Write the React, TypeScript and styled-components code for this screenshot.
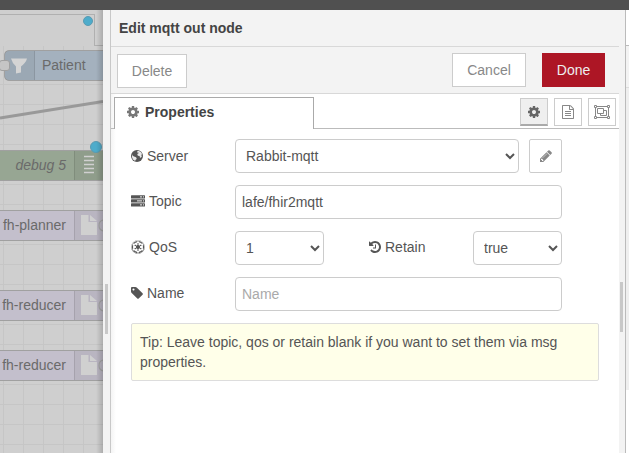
import React from "react";
import styled, { createGlobalStyle, css } from "styled-components";
import { FaEmpire } from "react-icons/fa";

const Global = createGlobalStyle`
  * { box-sizing: border-box; }
  html, body { margin: 0; padding: 0; overflow: hidden; }
  body, button, input, select { font-family: "Liberation Sans", Arial, sans-serif; font-size: 14px; }
`;

const Page = styled.div`
  display: flex;
  flex-direction: column;
  width: 629px;
  height: 453px;
  color: #555;
  line-height: 20px;
  background: #fff;
`;
const TopBar = styled.div`height: 10px; flex: none; background: #505050;`;
const Main = styled.div`display: flex; flex: 1; min-height: 0;`;

const Workspace = styled.div`
  position: relative;
  width: 103px;
  flex: none;
  overflow: hidden;
  background: #cfcfcf;
  &::after {
    content: "";
    position: absolute;
    inset: 0 0 0 auto;
    width: 7px;
    background: linear-gradient(to right, rgba(0,0,0,0), rgba(0,0,0,0.17));
  }
`;
const WorkspaceTab = styled.div`
  position: absolute;
  top: 4px;
  left: -2px;
  width: 97px;
  height: 32px;
  border: 1px solid #b0b0b0;
  border-bottom: 0;
`;
const TabEdge = styled.div`
  position: absolute; top: 35px; left: 95px; width: 8px; height: 1px; background: #b0b0b0;
`;
const Grid = styled.div`
  position: absolute;
  inset: 36px 0 0 0;
  background-image: linear-gradient(to right, #c6c6c6 1px, transparent 1px), linear-gradient(#c6c6c6 1px, transparent 1px);
  background-size: 20px 20px;
  background-position: 3px 18px;
`;
const Wire = styled.svg`position: absolute; left: 0; top: 0; width: 103px; height: 443px;`;
const Changed = styled.i<{ $x: number; $y: number; $s: number }>`
  position: absolute;
  left: ${p => p.$x}px;
  top: ${p => p.$y}px;
  width: ${p => p.$s}px;
  height: ${p => p.$s}px;
  border-radius: 50%;
  border: 1px solid #5a9bb2;
  background: #4eaccb;
`;
const Node = styled.div<{ $y: number; $fill: string; $right?: boolean }>`
  position: absolute;
  top: ${p => p.$y}px;
  left: ${p => (p.$right ? -20 : 4)}px;
  width: ${p => (p.$right ? 131 : 110)}px;
  height: 31px;
  display: flex;
  align-items: center;
  border: 1px solid #a0a0a0;
  border-radius: 5px;
  background: ${p => p.$fill};
  color: #6a6a6a;
`;
const NodeLabel = styled.span<{ $italic?: boolean; $left?: boolean }>`
  flex: 1;
  font-style: ${p => (p.$italic ? "italic" : "normal")};
  text-align: ${p => (p.$left ? "left" : "right")};
  padding: ${p => (p.$left ? "0 0 2px 7px" : "0 8px 2px 0")};
`;
const NodeIcon = styled.span<{ $left?: boolean }>`
  width: ${p => (p.$left ? 30 : 36)}px;
  height: 29px;
  flex: none;
  background: rgba(0, 0, 0, 0.05);
  ${p => (p.$left ? "border-right" : "border-left")}: 1px solid rgba(0,0,0,0.1);
  svg { display: block; }
`;
const Port = styled.i`
  position: absolute; left: -6px; top: 9px; width: 11px; height: 11px;
  border: 1px solid #a0a0a0; border-radius: 3px; background: #c5c5c5;
`;

const Separator = styled.div`
  width: 8px;
  flex: none;
  display: flex;
  align-items: flex-start;
  padding: 274px 0 0 2px;
  background: #f3f3f3;
  border-right: 1px solid #c8c8c8;
  height: 443px;
`;
const Grip = styled.i<{ $h: number }>`width: 3px; height: ${p => p.$h}px; background: #c8c8c8;`;

const Tray = styled.section`
  width: 508px;
  flex: none;
  display: flex;
  flex-direction: column;
  background: linear-gradient(to right, #f4f4f4, #fff 5px);
`;
const Title = styled.header`
  height: 37px;
  padding: 8px 8px 0;
  font-weight: bold;
  color: #444;
  background: #f3f3f3;
  border-bottom: 1px solid #d8d8d8;
`;
const Toolbar = styled.div`
  display: flex;
  height: 47px;
  padding: 6px 14px 0 6px;
  background: #f3f3f3;
  border-bottom: 1px solid #d8d8d8;
`;
const Spacer = styled.span`flex: 1;`;
const Button = styled.button<{ $primary?: boolean; $w: number; $drop?: boolean }>`
  width: ${p => p.$w}px;
  height: 34px;
  padding: 0;
  margin-top: ${p => (p.$drop ? 1 : 0)}px;
  border: 1px solid ${p => (p.$primary ? "#ad1625" : "#ccc")};
  background: ${p => (p.$primary ? "#ad1625" : "#fff")};
  color: ${p => (p.$primary ? "#eee" : "#888")};
  & + & { margin-left: 16px; }
`;

const Tabs = styled.div`display: flex; height: 35px;`;
const TabEdgeLeft = styled.span`width: 3px; border-bottom: 1px solid #bbb;`;
const Tab = styled.div`
  display: flex;
  align-items: center;
  gap: 5px;
  width: 200px;
  height: 32px;
  margin-top: 3px;
  padding: 0 0 4px 11px;
  font-weight: bold;
  color: #444;
  background: #fff;
  border: 1px solid #aaa;
  border-bottom: 0;
  svg { color: #777; }
`;
const TabTools = styled.div`
  flex: 1;
  display: flex;
  justify-content: flex-end;
  gap: 6px;
  padding: 4px 3px 0 0;
  border-bottom: 1px solid #bbb;
`;
const TabButton = styled.button<{ $active?: boolean }>`
  display: flex;
  align-items: center;
  justify-content: center;
  width: 28px;
  height: 28px;
  padding: 0;
  border: 1px solid #ccc;
  background: #fff;
  color: #888;
  ${p => p.$active && css`
    background: #efefef;
    color: #666;
    border-bottom: 2px solid #aaa;
  `}
`;

const Form = styled.form`
  display: flex;
  flex-direction: column;
  gap: 12px;
  padding: 10px 20px;
`;
const Row = styled.div`display: flex; height: 34px;`;
const Label = styled.label<{ $w?: number; $gap?: number; $up?: boolean }>`
  width: ${p => p.$w ?? 104}px;
  flex: none;
  display: flex;
  align-items: center;
  gap: ${p => p.$gap ?? 3}px;
  height: ${p => (p.$up ? 32 : 34)}px;
  svg { flex: none; }
`;
const field = css`
  height: 34px;
  border: 1px solid #ccc;
  border-radius: 4px;
  background: #fff;
  color: #555;
  outline: 0;
`;
const Input = styled.input`
  ${field}
  width: 327px;
  padding: 0 6px;
  &::placeholder { color: #aaa; opacity: 1; }
`;
const Select = styled.select<{ $w: number }>`
  ${field}
  width: ${p => p.$w}px;
  padding: 0 0 0 6px;
`;
const EditButton = styled.button`
  width: 33px;
  height: 34px;
  margin-left: 10px;
  padding: 0;
  display: flex;
  align-items: center;
  justify-content: center;
  border: 1px solid #ccc;
  border-radius: 2px;
  background: #fff;
  color: #888;
`;
const Tip = styled.div`
  width: 468px;
  height: 58px;
  padding: 8px;
  background: #ffffe9;
  border: 1px solid #ddd;
  border-radius: 2px;
`;

const RightSeparator = styled.div`
  width: 7px;
  flex: none;
  display: flex;
  align-items: flex-start;
  padding: 272px 0 0 1px;
  background: #f3f3f3;
  border-right: 1px solid #bbb;
  height: 443px;
`;
const Sidebar = styled.aside`
  width: 3px;
  flex: none;
  display: flex;
  flex-direction: column;
`;
const SidePart = styled.div<{ $h: number; $bg: string; $line?: string }>`
  height: ${p => p.$h}px;
  background: ${p => p.$bg};
  border-bottom: ${p => (p.$line ? `1px solid ${p.$line}` : "0")};
`;

const Glyph = ({ d, size = 14, left = 0 }: { d: string; size?: number; left?: number }) => (
  <svg width={size} height={size} viewBox={`${left} 0 1792 1792`} fill="currentColor"><path d={d} /></svg>
);
const COG = "M1152 896q0-106-75-181t-181-75-181 75-75 181 75 181 181 75 181-75 75-181zm512-109v222q0 12-8 23t-20 13l-185 28q-19 54-39 91 35 50 107 138 10 12 10 25t-9 23q-27 37-99 108t-94 71q-12 0-26-9l-138-108q-44 23-91 38-16 136-29 186-7 28-36 28h-222q-14 0-24.5-8.5t-11.5-21.5l-28-184q-49-16-90-37l-141 107q-10 9-25 9-14 0-25-11-126-114-165-168-7-10-7-23 0-12 8-23 15-21 51-66.5t54-70.5q-27-50-41-99l-183-27q-13-2-21-12.5t-8-23.5v-222q0-12 8-23t19-13l186-28q14-46 39-92-40-57-107-138-10-12-10-24 0-10 9-23 26-36 98.5-107.5t94.5-71.5q13 0 26 10l138 107q44-23 91-38 16-136 29-186 7-28 36-28h222q14 0 24.5 8.5t11.5 21.5l28 184q49 16 90 37l142-107q9-9 24-9 13 0 25 10 129 119 165 170 7 8 7 22 0 12-8 23-15 21-51 66.5t-54 70.5q26 50 41 98l183 28q13 2 21 12.5t8 23.5z";
const TAG = "M576 448q0-53-37.5-90.5t-90.5-37.5-90.5 37.5-37.5 90.5 37.5 90.5 90.5 37.5 90.5-37.5 37.5-90.5zm1067 576q0 53-37 90l-491 492q-39 37-91 37-53 0-90-37l-715-716q-38-37-64.5-101t-26.5-117v-416q0-52 38-90t90-38h416q53 0 117 26.5t102 64.5l715 714q37 39 37 91z";
const HISTORY = "M1664 896q0 156-61 298t-164 245-245 164-298 61q-172 0-327-72.5t-264-204.5q-7-10-6.5-22.5t8.5-20.5l137-138q10-9 25-9 16 2 23 12 73 95 179 147t225 52q104 0 198.5-40.5t163.5-109.5 109.5-163.5 40.5-198.5-40.5-198.5-109.5-163.5-163.5-109.5-198.5-40.5q-98 0-188 35.5t-160 101.5l137 138q31 30 14 69-17 40-59 40h-448q-26 0-45-19t-19-45v-448q0-42 40-59 39-17 69 14l130 129q107-101 244.5-156.5t284.5-55.5q156 0 298 61t245 164 164 245 61 298zm-640-288v448q0 14-9 23t-23 9h-320q-14 0-23-9t-9-23v-64q0-14 9-23t23-9h224v-352q0-14 9-23t23-9h64q14 0 23 9t9 23z";
const PENCIL = "M491 1536l91-91-235-235-91 91v107h128v128h107zm523-928q0-22-22-22-10 0-17 7l-542 542q-7 7-7 17 0 22 22 22 10 0 17-7l542-542q7-7 7-17zm-54-192l416 416-832 832h-416v-416zm683 96q0 53-37 90l-166 166-416-416 166-165q36-38 90-38 53 0 91 38l235 234q37 39 37 91z";
const FILE = "M1596 380q28 28 48 76t20 88v1152q0 40-28 68t-68 28h-1344q-40 0-68-28t-28-68v-1600q0-40 28-68t68-28h896q40 0 88 20t76 48zm-444-244v376h376q-10-29-22-41l-313-313q-12-12-41-22zm384 1528v-1024h-416q-40 0-68-28t-28-68v-416h-768v1536h1280zm-1024-864q0-14 9-23t23-9h704q14 0 23 9t9 23v64q0 14-9 23t-23 9h-704q-14 0-23-9t-9-23v-64zm736 224q14 0 23 9t9 23v64q0 14-9 23t-23 9h-704q-14 0-23-9t-9-23v-64q0-14 9-23t23-9h704zm0 256q14 0 23 9t9 23v64q0 14-9 23t-23 9h-704q-14 0-23-9t-9-23v-64q0-14 9-23t23-9h704z";

const Globe = () => (
  <svg width="13" height="12" viewBox="0 0 13 12">
    <circle cx="6" cy="6" r="6" fill="#555" />
    <path d="M6.300 1.100 8 .9l2 1.300 1.100 1.900-.8.8.5 1.500-1 1.300-.9-.3-.3-1.300-1.700-.3-.6-1.200.7-1.300 1-.1-.1-.7-.9.4-.6-.5z M1.100 4.200l.6 1.500 1.300.9 1.500.4 1.200 1-.3 1.200-1 .7-.2 1.200L2 9.400 1 7.200z" fill="#e9e9e9" />
  </svg>
);
const Server = () => (
  <svg width="14" height="12" viewBox="0 0 14 12">
    {[0, 4, 8].map(y => <rect key={y} y={y + 0.3} width="14" height="3.200" rx=".5" fill="#555" />)}
    <path d="M9 1.900h2M6 5.900h5M9 9.900h2" stroke="#eee" />
    <path d="M12 1.900h1M12 5.900h1M12 9.900h1" stroke="#eee" />
  </svg>
);
const ObjectGroup = () => (
  <svg width="16" height="14" viewBox="0 0 16 14" fill="none" stroke="#888">
    <path d="M3 1.500h10M3 12.500h10M1.500 3v8M14.500 3v8" />
    <path d="M.5.5h2v2h-2zM13.500.5h2v2h-2zM.5 11.500h2v2h-2zM13.500 11.500h2v2h-2z" fill="#fff" />
    <path d="M3.500 3.500h6v5h-6zM9.500 5.500h3v5h-6v-2" />
  </svg>
);
const Document = () => (
  <svg width="36" height="29" viewBox="0 0 36 29">
    <path d="M6 4h7.500v7H22v13H6zM15 4l7 6h-7z" fill="#d0d0d0" />
    <path d="M30 9q-6 0-6 5.500t6 5.500" fill="none" stroke="#a4a4a4" strokeWidth="1.200" />
  </svg>
);

export default function App() {
  return (
    <>
      <Global />
      <Page>
        <TopBar />
        <Main>
          <Workspace>
            <WorkspaceTab />
            <TabEdge />
            <Grid />
            <Wire><path d="M0 108 103 91.500" stroke="#999" strokeWidth="3" fill="none" /></Wire>
            <Node $y={40} $fill="#a4b1be">
              <NodeIcon $left>
                <svg width="29" height="29" viewBox="0 0 29 29"><path d="M6 7.500h16q-1 4-6 8v6l-5 1v-7q-4-4-5-8z" fill="#d4d4d4" /></svg>
              </NodeIcon>
              <NodeLabel $left>Patient</NodeLabel>
              <Port />
            </Node>
            <Node $y={140} $fill="#97a693" $right>
              <NodeLabel $italic>debug 5</NodeLabel>
              <NodeIcon>
                <svg width="30" height="29" viewBox="0 0 30 29"><path d="M9 5.500h10M9 9.500h10M9 13.500h10M9 17.500h10M9 21.500h10" stroke="#d0d0d0" strokeWidth="1.300" /></svg>
              </NodeIcon>
            </Node>
            {[[200, "fh-planner"], [280, "fh-reducer"], [340, "fh-reducer"]].map(([y, name]) => (
              <Node key={y} $y={y as number} $fill="#c3bfcc" $right>
                <NodeLabel>{name}</NodeLabel>
                <NodeIcon><Document /></NodeIcon>
              </Node>
            ))}
            <Changed $x={83} $y={6} $s={10} />
            <Changed $x={90} $y={131} $s={12} />
          </Workspace>
          <Separator><Grip $h={50} /></Separator>
          <Tray>
            <Title>Edit mqtt out node</Title>
            <Toolbar>
              <Button $w={70} $drop>Delete</Button>
              <Spacer />
              <Button $w={74}>Cancel</Button>
              <Button $w={63} $primary>Done</Button>
            </Toolbar>
            <Tabs>
              <TabEdgeLeft />
              <Tab><Glyph d={COG} />Properties</Tab>
              <TabTools>
                <TabButton $active><Glyph d={COG} /></TabButton>
                <TabButton><Glyph d={FILE} /></TabButton>
                <TabButton><ObjectGroup /></TabButton>
              </TabTools>
            </Tabs>
            <Form>
              <Row>
                <Label><Globe />Server</Label>
                <Select $w={284}><option>Rabbit-mqtt</option></Select>
                <EditButton type="button"><Glyph d={PENCIL} /></EditButton>
              </Row>
              <Row>
                <Label $up $gap={4}><Server />Topic</Label>
                <Input defaultValue="lafe/fhir2mqtt" />
              </Row>
              <Row>
                <Label $up $gap={4}><FaEmpire size={14} />QoS</Label>
                <Select $w={89}><option>1</option></Select>
                <Spacer />
                <Label $up $gap={2}><Glyph d={HISTORY} left={128} />Retain</Label>
                <Select $w={89}><option>true</option></Select>
                <Label as="span" $w={37} />
              </Row>
              <Row>
                <Label $up $gap={2}><Glyph d={TAG} left={128} />Name</Label>
                <Input placeholder="Name" />
              </Row>
              <Tip>Tip: Leave topic, qos or retain blank if you want to set them via msg properties.</Tip>
            </Form>
          </Tray>
          <RightSeparator><Grip $h={50} /></RightSeparator>
          <Sidebar>
            <SidePart $h={36} $bg="#fff" $line="#bbb" />
            <SidePart $h={42} $bg="#f3f3f3" $line="#ddd" />
            <SidePart $h={302} $bg="#efefef" />
          </Sidebar>
        </Main>
      </Page>
    </>
  );
}
